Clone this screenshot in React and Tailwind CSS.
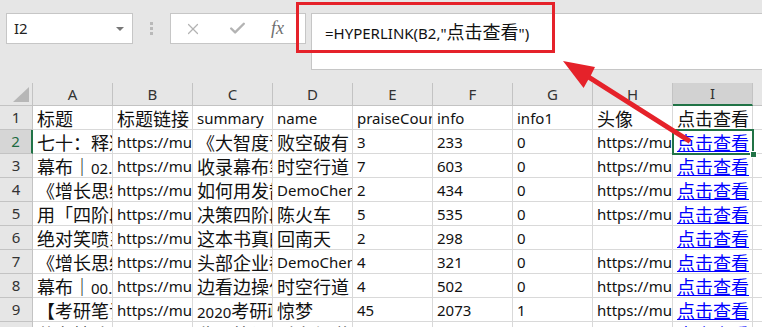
import { X, Check } from 'lucide-react'

const CJK = /([\u2E80-\u9FFF\u3000-\u303F\uFF00-\uFFEF《》「」【】]+)/

// Excel's 等线 has wide CJK glyphs and narrow latin, so size the two runs apart
function T({ s }) {
  return s.split(CJK).map((p, i) =>
    i % 2 === 1 ? (
      <span key={i} className="font-['Noto_Sans_CJK_SC',sans-serif] text-[18px]">{p}</span>
    ) : (
      <span key={i}>{p}</span>
    )
  )
}

const COLS = ['A', 'B', 'C', 'D', 'E', 'F', 'G', 'H', 'I']
const URL = 'https://mubu.com/doc/abc'
const LINK = '点击查看'

const ROWS = [
  ['标题', '标题链接', 'summary', 'name', 'praiseCount', 'info', 'info1', '头像', '点击查看'],
  ['七十：释迦牟尼', URL, '《大智度论》', '败空破有', '3', '233', '0', URL, LINK],
  ['幕布｜02.思维导图', URL, '收录幕布笔记', '时空行道', '7', '603', '0', URL, LINK],
  ['《增长思维》', URL, '如何用发散思维', 'DemoChen', '2', '434', '0', URL, LINK],
  ['用「四阶段」', URL, '决策四阶段', '陈火车', '5', '535', '0', URL, LINK],
  ['绝对笑喷系列', URL, '这本书真的好', '回南天', '2', '298', '0', '', LINK],
  ['《增长思维》', URL, '头部企业都在', 'DemoChen', '4', '321', '0', URL, LINK],
  ['幕布｜00.使用指南', URL, '边看边操作', '时空行道', '4', '502', '0', URL, LINK],
  ['【考研笔记】', URL, '2020考研政治', '惊梦', '45', '2073', '1', URL, LINK],
  ['幕布精选', URL, '收录笔记大全', '时空行道', '3', '188', '0', URL, LINK],
]

function Cell({ text, r, c }) {
  const isLink = c === 8 && r > 0
  return (
    <div className="w-[80px] h-[24px] shrink-0 border-r border-b border-[#d9d9d9] bg-white overflow-hidden whitespace-nowrap pl-[4px] leading-[24px]">
      {isLink ? (
        <span className="font-['Noto_Sans_CJK_SC',sans-serif] text-[18px] text-[#0000ff] underline underline-offset-[1px] decoration-1 decoration-[#0000ff]">
          {text}
        </span>
      ) : (
        <T s={text} />
      )}
    </div>
  )
}

export default function App() {
  return (
    <div className="relative w-[762px] h-[327px] overflow-hidden bg-[#e6e6e6] font-['Noto_Sans','Noto_Sans_CJK_SC',sans-serif] text-[15px] text-[#111]">
      {/* Formula bar */}
      <div className="h-[83px] flex items-start pt-[13px] pl-[6px]">
        <div className="w-[127px] h-[31px] bg-white border border-[#c6c6c6] flex items-center justify-between pl-[7px] pr-[8px]">
          <span className="text-[#222]">I2</span>
          <span className="w-0 h-0 border-l-[4px] border-r-[4px] border-t-[4px] border-l-transparent border-r-transparent border-t-[#777]" />
        </div>
        <div className="w-[37px] h-[31px] flex flex-col items-center justify-center gap-[2px]">
          <span className="w-[3px] h-[3px] bg-[#b9b9b9]" />
          <span className="w-[3px] h-[3px] bg-[#b9b9b9]" />
          <span className="w-[3px] h-[3px] bg-[#b9b9b9]" />
        </div>
        <div className="w-[136px] h-[31px] bg-white border border-[#c6c6c6] flex items-center pl-[13px]">
          <X size={18} strokeWidth={1.6} className="text-[#b3b3b3]" />
          <Check size={19} strokeWidth={3} className="text-[#b3b3b3] ml-[26px]" />
          <span className="ml-[24px] font-['Liberation_Serif',serif] italic text-[18px] text-[#6e6e6e]">fx</span>
        </div>
        <div className="ml-[5px] flex-1 h-[57px] bg-white border border-r-0 border-[#c6c6c6] pl-[13px] pt-[4px] whitespace-nowrap leading-[26px]">
          <T s={'=HYPERLINK(B2,"点击查看")'} />
        </div>
      </div>

      {/* Column headers */}
      <div className="flex h-[23px] text-[#333]">
        <div className="w-[33px] shrink-0 border-r border-b border-[#c3c3c3] flex items-end justify-end pr-[3px] pb-[3px]">
          <svg width="16" height="15" viewBox="0 0 16 15">
            <polygon points="0,15 16,15 16,0" fill="#b7b7b7" />
          </svg>
        </div>
        {COLS.map((c, i) => (
          <div
            key={c}
            className={
              i === 8
                ? 'w-[80px] shrink-0 border-r border-[#c3c3c3] border-b-2 border-b-[#217346] bg-[#d2d2d2] flex items-center justify-center'
                : 'w-[80px] shrink-0 border-r border-b border-[#c3c3c3] flex items-center justify-center'
            }
          >
            {c}
          </div>
        ))}
        <div className="flex-1 border-b border-[#c3c3c3]" />
      </div>

      {/* Rows */}
      {ROWS.map((row, r) => (
        <div key={r} className="flex">
          <div
            className={
              r === 1
                ? 'w-[33px] h-[24px] shrink-0 border-r-2 border-r-[#217346] border-b border-b-[#c3c3c3] bg-[#d6d6d6] flex items-center justify-center text-[#1e6b41]'
                : 'w-[33px] h-[24px] shrink-0 border-r border-b border-[#c3c3c3] flex items-center justify-center text-[#333]'
            }
          >
            {r + 1}
          </div>
          {row.map((t, c) => (
            <Cell key={c} text={t} r={r} c={c} />
          ))}
          <div className="flex-1 h-[24px] border-b border-[#d9d9d9] bg-white" />
        </div>
      ))}

      {/* Active cell I2 */}
      <div className="absolute left-[672px] top-[129px] w-[82px] h-[26px] border-2 border-[#217346] pointer-events-none" />
      <div className="absolute left-[750px] top-[151px] w-[7px] h-[7px] bg-[#217346] border border-white pointer-events-none" />

      {/* Annotation: red box + arrow */}
      <div className="absolute left-[296px] top-[2px] w-[259px] h-[51px] border-[3px] border-[#e5222a] pointer-events-none" />
      <svg className="absolute left-0 top-0 pointer-events-none" width="762" height="327">
        <polygon
          points="563,61 595,67 590.8,75.5 691.3,139.3 688.7,143.5 588.2,79.7 583.6,88.1"
          fill="#e5222a"
        />
      </svg>
    </div>
  )
}
